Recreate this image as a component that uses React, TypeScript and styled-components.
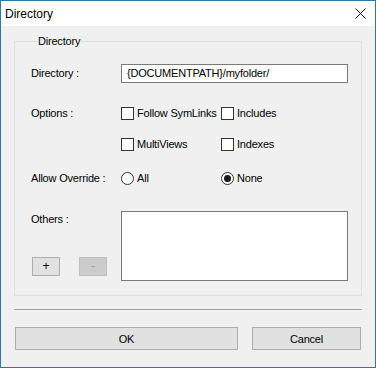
import React from 'react';
import styled, { createGlobalStyle } from 'styled-components';

const GlobalStyle = createGlobalStyle`
    html, body {
        margin: 0;
        padding: 0;
        background: #ffffff;
    }
    body {
        font-family: "Liberation Sans", Arial, sans-serif;
        font-size: 11px;
        letter-spacing: -0.2px;
        color: #000000;
    }
    * {
        box-sizing: border-box;
    }
`

// 窗口
const Window = styled.div`
    width: 376px;
    height: 368px;
    border: 1px solid #2b7aa5;
    display: flex;
    flex-direction: column;
    background: #f0f0f0;
`

const TitleBar = styled.div`
    height: 25px;
    background: #ffffff;
    display: flex;
    align-items: center;
    justify-content: space-between;
    padding: 0 9px 0 4px;
    font-size: 12px;
    letter-spacing: 0;
`

const CloseIcon = styled.svg`
    width: 11px;
    height: 11px;
    display: block;
`

const Body = styled.div`
    flex: 1;
    padding: 8px 13px 0 13px;
    display: flex;
    flex-direction: column;
`

const GroupBox = styled.fieldset`
    margin: 0;
    padding: 16px 13px 11px 16px;
    border: 1px solid #dcdcdc;
    height: 262px;
    display: flex;
    flex-direction: column;

    legend {
        padding: 0 1px;
        margin-left: 6px;
        line-height: 14px;
    }
`

const Row = styled.div<{ $top: number }>`
    display: grid;
    grid-template-columns: 90px 1fr;
    margin-top: ${p => p.$top}px;
`

const Label = styled.div<{ $line: number }>`
    line-height: ${p => p.$line}px;
    white-space: nowrap;
`

const TextInput = styled.div`
    height: 19px;
    border: 1px solid #7a7a7a;
    background: #ffffff;
    padding: 0 5px;
    line-height: 17px;
    white-space: nowrap;
`

const Options = styled.div`
    display: grid;
    grid-template-columns: 100px 1fr;
    row-gap: 18px;
`

const Choice = styled.label`
    display: flex;
    align-items: center;
    gap: 3px;
    height: 13px;
    line-height: 13px;
    white-space: nowrap;
`

const Box = styled.span`
    width: 13px;
    height: 13px;
    border: 1px solid #333333;
    background: #ffffff;
    flex: none;
`

const Radio = styled.span<{ $checked?: boolean }>`
    width: 13px;
    height: 13px;
    border: 1px solid #333333;
    border-radius: 50%;
    background: #ffffff;
    flex: none;
    display: flex;
    align-items: center;
    justify-content: center;

    &::after {
        content: '';
        width: 7px;
        height: 7px;
        border-radius: 50%;
        background: #1a1a1a;
        display: ${p => (p.$checked ? 'block' : 'none')};
    }
`

const OthersSide = styled.div`
    display: flex;
    flex-direction: column;
    justify-content: space-between;
    padding-bottom: 5px;
`

const SmallButtons = styled.div`
    display: flex;
    gap: 19px;
    padding-left: 1px;
`

const SmallButton = styled.button<{ $disabled?: boolean }>`
    width: 28px;
    height: 19px;
    padding: 0;
    font-family: inherit;
    font-size: 12px;
    line-height: 17px;
    color: ${p => (p.$disabled ? '#a0a0a0' : '#000000')};
    background: ${p => (p.$disabled ? '#cccccc' : '#e1e1e1')};
    border: 1px solid ${p => (p.$disabled ? '#bfbfbf' : '#adadad')};
`

const TextArea = styled.div`
    height: 70px;
    border: 1px solid #7a7a7a;
    background: #ffffff;
`

const Separator = styled.div`
    height: 1px;
    background: #a0a0a0;
    margin-top: 13px;
    width: 348px;
`

const ButtonBar = styled.div`
    display: grid;
    grid-template-columns: 223px 109px;
    justify-content: space-between;
    margin: 17px 0 0 1px;
    width: 346px;
`

const DialogButton = styled.button`
    height: 23px;
    padding: 0;
    font-family: inherit;
    font-size: 11px;
    letter-spacing: inherit;
    color: #000000;
    background: #e1e1e1;
    border: 1px solid #adadad;
`

function App() {
    return (
        <>
            <GlobalStyle />
            <Window>
                <TitleBar>
                    <span>Directory</span>
                    <CloseIcon viewBox="0 0 11 11">
                        <path d="M0.5 0.5 L10.5 10.5 M10.5 0.5 L0.5 10.5" stroke="#111" strokeWidth="1" fill="none" />
                    </CloseIcon>
                </TitleBar>

                <Body>
                    <GroupBox>
                        <legend>Directory</legend>

                        {/* 目录 */}
                        <Row $top={0}>
                            <Label $line={19}>Directory :</Label>
                            <TextInput>{'{DOCUMENTPATH}/myfolder/'}</TextInput>
                        </Row>

                        {/* 选项 */}
                        <Row $top={24}>
                            <Label $line={13}>Options :</Label>
                            <Options>
                                <Choice><Box />Follow SymLinks</Choice>
                                <Choice><Box />Includes</Choice>
                                <Choice><Box />MultiViews</Choice>
                                <Choice><Box />Indexes</Choice>
                            </Options>
                        </Row>

                        <Row $top={21}>
                            <Label $line={13}>Allow Override :</Label>
                            <Options>
                                <Choice><Radio />All</Choice>
                                <Choice><Radio $checked />None</Choice>
                            </Options>
                        </Row>

                        {/* 其他 */}
                        <Row $top={26}>
                            <OthersSide>
                                <Label $line={16}>Others :</Label>
                                <SmallButtons>
                                    <SmallButton>+</SmallButton>
                                    <SmallButton $disabled>-</SmallButton>
                                </SmallButtons>
                            </OthersSide>
                            <TextArea />
                        </Row>
                    </GroupBox>

                    <Separator />

                    <ButtonBar>
                        <DialogButton>OK</DialogButton>
                        <DialogButton>Cancel</DialogButton>
                    </ButtonBar>
                </Body>
            </Window>
        </>
    )
}

export default App;
